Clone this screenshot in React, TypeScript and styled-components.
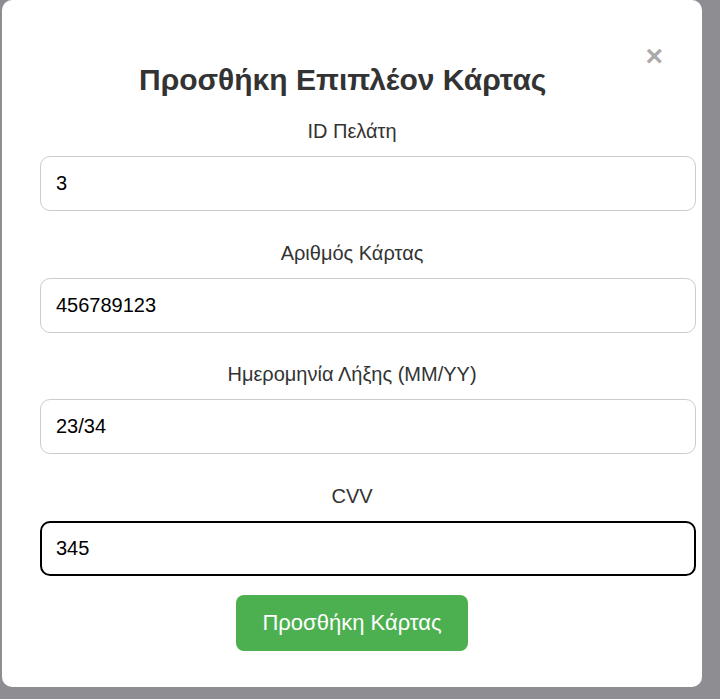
import React from 'react'
import styled, { createGlobalStyle } from 'styled-components'

const GlobalStyle = createGlobalStyle`
  html, body {
    margin: 0;
    padding: 0;
    background: #8e8e92;
    font-family: "Liberation Sans", Arial, sans-serif;
  }
`

const Backdrop = styled.div`
  min-height: 100vh;
  padding-left: 2px;
  box-sizing: border-box;
`

const Modal = styled.div`
  width: 700px;
  box-sizing: border-box;
  background: #fff;
  border-radius: 10px;
  padding: 0 38px 36px;
`

const Header = styled.div`
  display: flex;
  align-items: flex-start;
`

const Title = styled.h2`
  flex: 1;
  margin: 64px 0 24px;
  font-size: 30px;
  line-height: 32px;
  font-weight: bold;
  color: #333;
  text-align: center;
`

const Close = styled.span`
  margin-top: 41px;
  margin-right: 1px;
  font-size: 30px;
  line-height: 30px;
  font-weight: bold;
  color: #aaa;
  cursor: pointer;
`

const Field = styled.div<{ $last?: boolean }>`
  margin-bottom: ${(p) => (p.$last ? '19px' : '30.5px')};
`

const Label = styled.label`
  display: block;
  text-align: center;
  font-size: 20px;
  line-height: 23px;
  color: #333;
  margin-bottom: 13px;
`

const Input = styled.input<{ $focused?: boolean }>`
  display: block;
  width: 100%;
  box-sizing: content-box;
  height: 23px;
  padding: ${(p) => (p.$focused ? '14px' : '15px')};
  border: ${(p) => (p.$focused ? '2px solid #000' : '1px solid #ccc')};
  border-radius: 10px;
  font-family: "Liberation Sans", Arial, sans-serif;
  font-size: 20px;
  color: #000;
  background: #fff;
  outline: none;
`

const Actions = styled.div`
  display: flex;
  justify-content: center;
`

const Submit = styled.button`
  height: 56px;
  padding: 0 26px;
  border: none;
  border-radius: 8px;
  background: #4caf50;
  color: #fff;
  font-family: "Liberation Sans", Arial, sans-serif;
  font-size: 22px;
  cursor: pointer;
`

const fields = [
  { label: 'ID Πελάτη', value: '3' },
  { label: 'Αριθμός Κάρτας', value: '456789123' },
  { label: 'Ημερομηνία Λήξης (MM/YY)', value: '23/34' },
  { label: 'CVV', value: '345' },
]

export default function App() {
  return (
    <>
      <GlobalStyle />
      <Backdrop>
        <Modal>
          <Header>
            <Title>Προσθήκη Επιπλέον Κάρτας</Title>
            <Close>×</Close>
          </Header>
          <form onSubmit={(e) => e.preventDefault()}>
            {fields.map((f, i) => {
              const last = i === fields.length - 1
              return (
                <Field key={f.label} $last={last}>
                  <Label>{f.label}</Label>
                  <Input
                    type="text"
                    defaultValue={f.value}
                    $focused={last}
                    autoFocus={last}
                  />
                </Field>
              )
            })}
            <Actions>
              <Submit type="submit">Προσθήκη Κάρτας</Submit>
            </Actions>
          </form>
        </Modal>
      </Backdrop>
    </>
  )
}
